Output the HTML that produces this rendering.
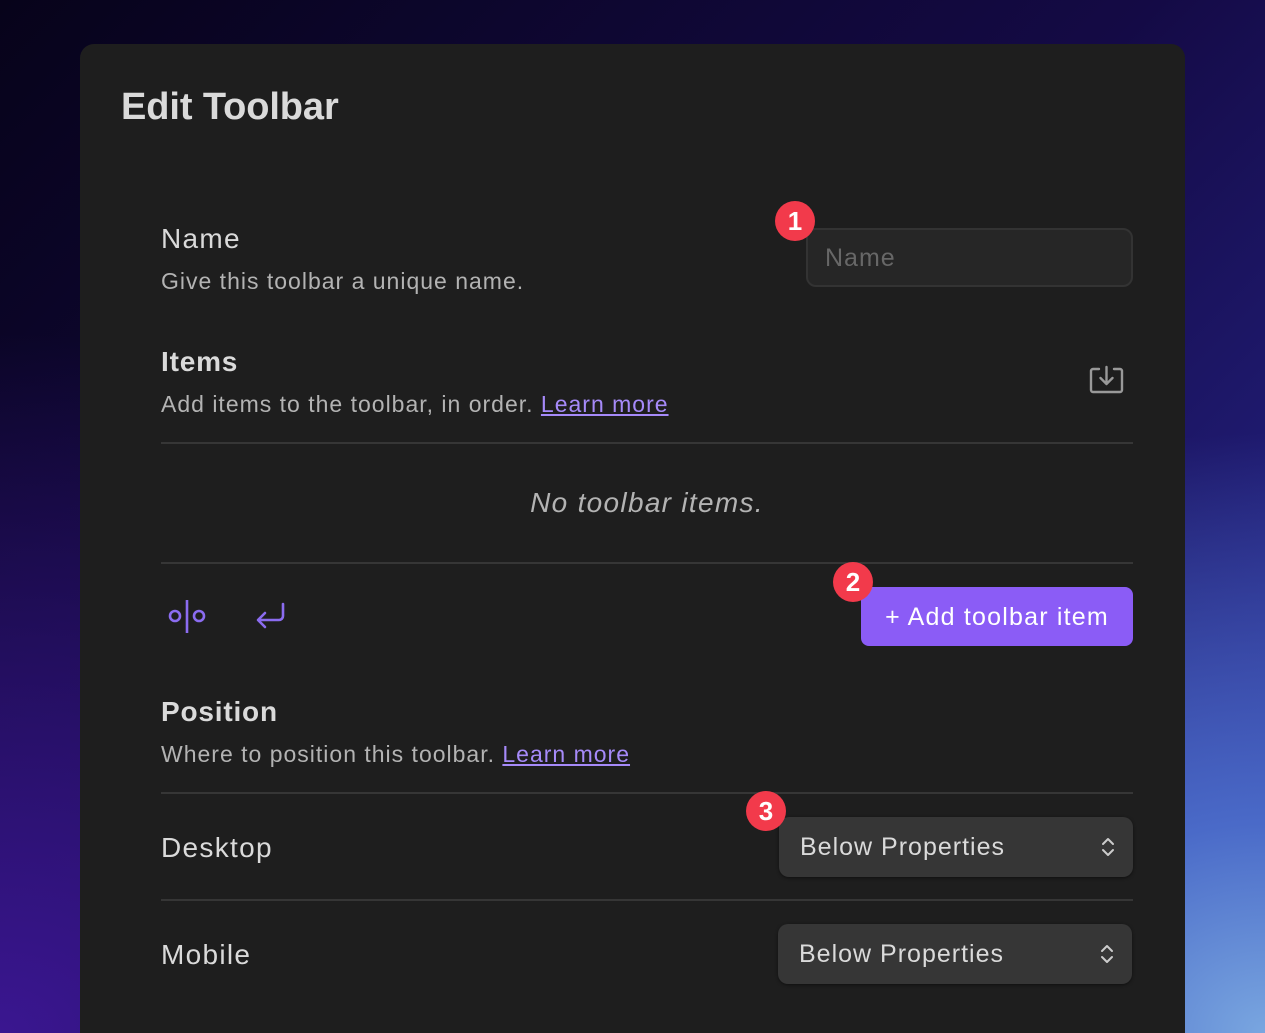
<!DOCTYPE html>
<html><head><meta charset="utf-8"><style>
*{box-sizing:border-box;margin:0;padding:0}
html{width:1265px;height:1033px;overflow:hidden}
body{width:1265px;height:1033px;overflow:hidden;position:relative;font-family:"Liberation Sans",sans-serif;
background:radial-gradient(ellipse 700px 600px at 1265px 1033px,#79a6e0 0%,#4a6ac8 35%,rgba(40,40,140,0) 100%),radial-gradient(ellipse 900px 700px at 0 1033px,#3a1690 0%,rgba(30,10,90,0) 100%),linear-gradient(135deg,#07031a 0%,#140a45 50%,#2a2a9a 100%);}
.panel{position:absolute;left:80px;top:44px;width:1105px;height:989px;background:#1e1e1e;border-radius:14px 14px 0 0}
.t{position:absolute;color:#dadada;white-space:nowrap}
h1{position:absolute;left:121px;top:86px;font-size:38px;font-weight:bold;color:#dadada;letter-spacing:-0.1px}
.lbl{font-size:28px;letter-spacing:1.3px}
.b{font-weight:bold;letter-spacing:0.8px}
.desc{font-size:23px;color:#b3b3b3;letter-spacing:1px}
a{color:#a68af9;text-decoration:underline}
.hr{position:absolute;left:161px;width:972px;height:2px;background:#363636}
.badge{position:absolute;width:40px;height:40px;border-radius:50%;background:#f23a4b;color:#fff;font-weight:bold;font-size:26px;text-align:center;line-height:40px}
.sel{position:absolute;width:354px;height:60px;background:#363636;border-radius:10px;box-shadow:0 1px 3px rgba(0,0,0,.5);color:#dadada;font-size:25px;line-height:60px;padding-left:21px;letter-spacing:1px}
.sel svg{position:absolute;right:18px;top:19px}
</style></head><body>
<div class="panel"></div>
<h1>Edit Toolbar</h1>
<div class="t lbl" style="left:161px;top:223px">Name</div>
<div class="t desc" style="left:161px;top:268px">Give this toolbar a unique name.</div>
<div style="position:absolute;left:806px;top:228px;width:327px;height:59px;background:#262626;border:2px solid #333;border-radius:10px;color:#676767;font-size:25px;line-height:57px;padding-left:17px;letter-spacing:1px">Name</div>
<div class="badge" style="left:775px;top:201px">1</div>
<div class="t lbl b" style="left:161px;top:346px">Items</div>
<div class="t desc" style="left:161px;top:391px">Add items to the toolbar, in order. <a>Learn more</a></div>
<svg style="position:absolute;left:1089px;top:365px" width="36" height="30" viewBox="0 0 36 30" fill="none" stroke="#999" stroke-width="2.4" stroke-linecap="round" stroke-linejoin="round"><path d="M10 4H4a2 2 0 0 0-2 2v19a2 2 0 0 0 2 2h27a2 2 0 0 0 2-2V6a2 2 0 0 0-2-2h-6"/><path d="M17.5 2v17M11.5 13l6 6 6-6"/></svg>
<div class="hr" style="top:442px"></div>
<div class="t" style="left:161px;width:972px;top:487px;text-align:center;font-size:28px;font-style:italic;color:#b3b3b3;letter-spacing:1.3px">No toolbar items.</div>
<div class="hr" style="top:562px"></div>
<svg style="position:absolute;left:166px;top:598px" width="42" height="36" viewBox="0 0 42 36" fill="none" stroke="#8b6cf0" stroke-width="2.6"><circle cx="9" cy="18" r="5"/><circle cx="33" cy="18" r="5"/><path d="M21 2v33"/></svg>
<svg style="position:absolute;left:254px;top:601px" width="34" height="30" viewBox="0 0 34 30" fill="none" stroke="#8b6cf0" stroke-width="2.6" stroke-linecap="round" stroke-linejoin="round"><path d="M29 3v12a4 4 0 0 1-4 4H5M11 12l-7 7 7 7"/></svg>
<div style="position:absolute;left:861px;top:587px;width:272px;height:59px;background:#8b5cf6;border-radius:8px;color:#fff;font-size:25px;line-height:61px;text-align:center;letter-spacing:1.2px">+ Add toolbar item</div>
<div class="badge" style="left:833px;top:562px">2</div>
<div class="t lbl b" style="left:161px;top:696px">Position</div>
<div class="t desc" style="left:161px;top:741px">Where to position this toolbar. <a>Learn more</a></div>
<div class="hr" style="top:792px"></div>
<div class="t lbl" style="left:161px;top:832px">Desktop</div>
<div class="sel" style="left:779px;top:817px">Below Properties<svg width="14" height="22" viewBox="0 0 14 22" fill="none" stroke="#ccc" stroke-width="2" stroke-linecap="round" stroke-linejoin="round"><path d="M2 8l5-5 5 5M2 14l5 5 5-5"/></svg></div>
<div class="badge" style="left:746px;top:791px">3</div>
<div class="hr" style="top:899px"></div>
<div class="t lbl" style="left:161px;top:939px">Mobile</div>
<div class="sel" style="left:778px;top:924px">Below Properties<svg width="14" height="22" viewBox="0 0 14 22" fill="none" stroke="#ccc" stroke-width="2" stroke-linecap="round" stroke-linejoin="round"><path d="M2 8l5-5 5 5M2 14l5 5 5-5"/></svg></div>
</body></html>
